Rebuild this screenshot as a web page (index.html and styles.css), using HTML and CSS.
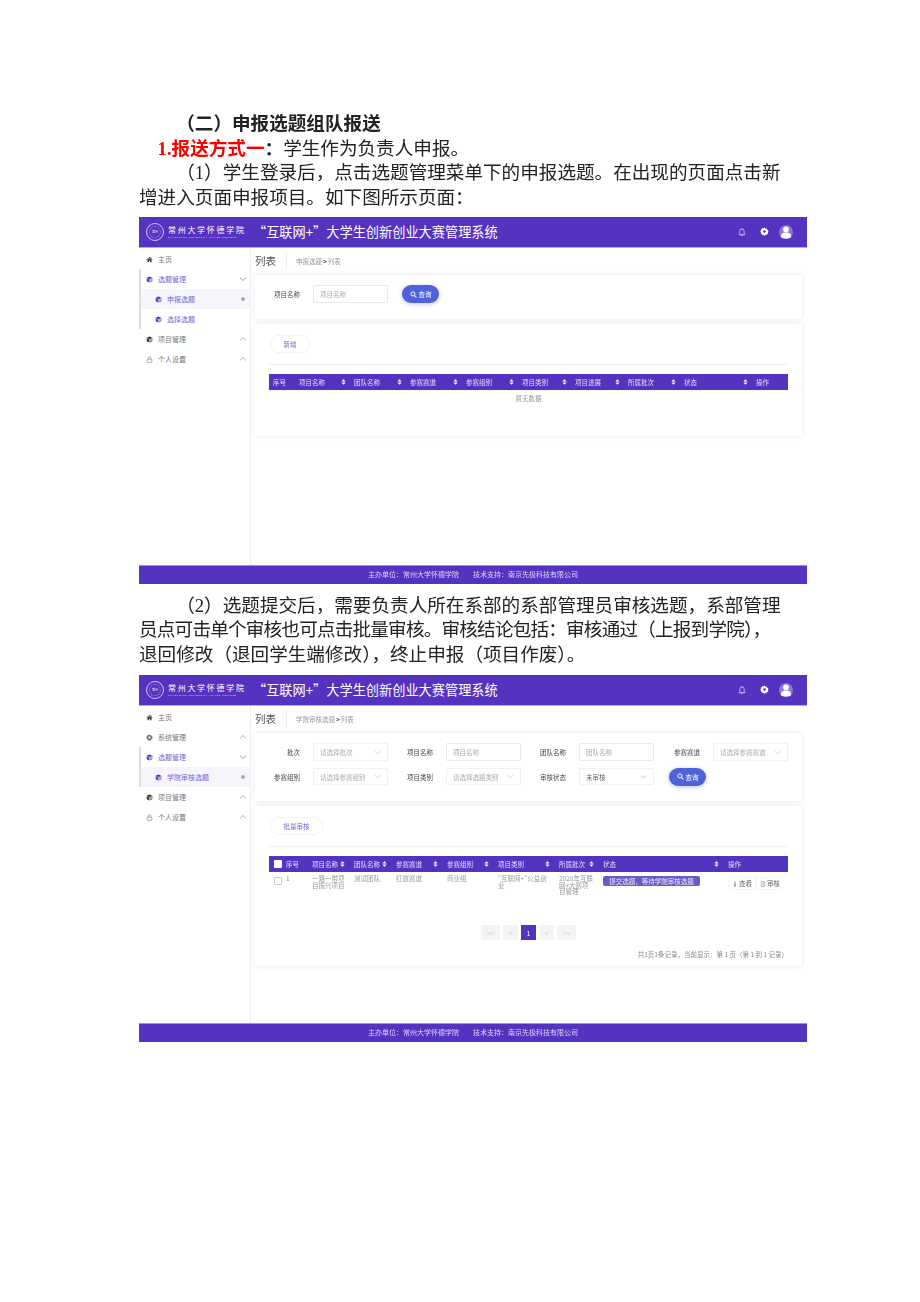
FILE: index.html
```html
<!DOCTYPE html>
<html lang="zh-CN">
<head>
  <meta charset="UTF-8">
  <title>申报选题组队报送</title>
  <link rel="stylesheet" href="styles.css">
</head>
<body>

  <!-- Shared icons -->
  <svg class="icon-defs" xmlns="http://www.w3.org/2000/svg">
    <symbol id="i-home" viewBox="0 0 12 12"><path d="M6 1.5 .8 6.2l.7.7L6 3l4.500 3.900.7-.7-2-1.800V2H8v1.500zM2.500 7v3.500h2.500V8h2v2.500h2.500V7L6 4z" fill="currentColor"/></symbol>
    <symbol id="i-cube" viewBox="0 0 12 12"><path d="M6 .8 1.200 3.200v5.600L6 11.200l4.800-2.400V3.200z" fill="currentColor"/><path d="M6 6 1.500 3.500M6 6v5M6 6l4.500-2.500" stroke="#fff" stroke-width=".8" fill="none"/><path d="M6 6.300v4.400l4.300-2.100V4z" fill="#fff" opacity=".55"/></symbol>
    <symbol id="i-lock" viewBox="0 0 12 12"><rect x="2" y="5.500" width="8" height="5.500" rx="1" fill="none" stroke="currentColor"/><path d="M3.800 5.500V3.400a2.200 2.200 0 0 1 4.400 0v2.100" fill="none" stroke="currentColor"/></symbol>
    <symbol id="i-gear" viewBox="0 0 12 12"><path d="M6 .8l1.100 1.400 1.700-.5.400 1.800 1.800.4-.5 1.700L11.900 6l-1.400 1.100.5 1.700-1.800.4-.4 1.800-1.700-.5L6 11.900l-1.100-1.400-1.700.5-.4-1.800-1.800-.4.5-1.700L.1 6l1.400-1.100-.5-1.700 1.800-.4.400-1.800 1.700.5zM6 4.200a1.800 1.800 0 1 0 0 3.600 1.800 1.800 0 0 0 0-3.600z" fill="currentColor" fill-rule="evenodd"/></symbol>
    <symbol id="i-up" viewBox="0 0 12 12"><path d="M1.500 8 6 3.800 10.500 8" fill="none" stroke="currentColor" stroke-width="1.100"/></symbol>
    <symbol id="i-down" viewBox="0 0 12 12"><path d="M1.500 4 6 8.200 10.500 4" fill="none" stroke="currentColor" stroke-width="1.100"/></symbol>
    <symbol id="i-bell" viewBox="0 0 12 12"><path d="M2.500 9.200h7L8.600 8V5a2.600 2.600 0 0 0-5.200 0v3zM5 10.300h2M6 1.600v.8" fill="none" stroke="currentColor" stroke-width=".9"/></symbol>
    <symbol id="i-user" viewBox="0 0 14 14"><circle cx="7" cy="7" r="7" fill="#8d77d8"/><circle cx="7" cy="4.300" r="2.900" fill="#fff"/><path d="M1.800 12.300c0-3.600 2-4.800 5.200-4.800s5.200 1.200 5.200 4.800c-1 .8-3 1.200-5.200 1.200s-4.200-.4-5.200-1.200z" fill="#fff"/></symbol>
    <symbol id="i-search" viewBox="0 0 12 12"><circle cx="5" cy="5" r="3.500" fill="none" stroke="#fff" stroke-width="1.600"/><path d="m7.800 7.800 3.200 3.200" stroke="#fff" stroke-width="1.800"/></symbol>
    <symbol id="i-sort" viewBox="0 0 8 10"><path d="M4 .5 7.500 4h-7zM4 9.500.5 6h7z" fill="#fff"/></symbol>
    <symbol id="i-info" viewBox="0 0 6 12"><path d="M2 1h2v2H2zM1 4.500h3V10h1v1H1v-1h1V5.500H1z" fill="currentColor"/></symbol>
    <symbol id="i-file" viewBox="0 0 12 12"><path d="M2.500 1h4.700l2.300 2.300V11h-7zM7 1v2.500h2.500M4 6h4M4 8h4" fill="none" stroke="currentColor" stroke-width=".8"/></symbol>
  </svg>

  <main class="doc">
    <p class="para indent-2 strong">（二）申报选题组队报送</p>
    <p class="para indent-1"><span class="red"><span class="latin">1.</span>报送方式一</span><b>：</b>学生作为负责人申报。</p>
    <p class="para indent-2">（<span class="latin-plain">1</span>）学生登录后，点击选题管理菜单下的申报选题。在出现的页面点击新<br><span class="no-indent">增进入页面申报项目。如下图所示页面：</span></p>

    <!-- Screenshot 1: student -->
    <section class="app">
      <header class="app-head">
        <div class="logo">
          <div class="logo-seal"><span>常州</span></div>
          <div class="logo-text">
            <div class="logo-cn">常州大学怀德学院</div>
            <div class="logo-en">CHANGZHOU UNIVERSITY HUAIDE COLLEGE</div>
          </div>
        </div>
        <h1 class="app-title">“互联网+”大学生创新创业大赛管理系统</h1>
        <div class="head-icons">
          <svg class="ic-bell"><use href="#i-bell"/></svg>
          <svg class="ic-gear"><use href="#i-gear"/></svg>
          <svg class="ic-user"><use href="#i-user"/></svg>
        </div>
      </header>
      <div class="app-body">
        <nav class="side">
          <div class="nav-item"><svg class="nav-ic dark"><use href="#i-home"/></svg>主页</div>
          <div class="nav-group">
            <div class="nav-item open"><svg class="nav-ic"><use href="#i-cube"/></svg>选题管理<svg class="chev"><use href="#i-down"/></svg></div>
            <div class="nav-item sub active"><svg class="nav-ic"><use href="#i-cube"/></svg>申报选题<i class="dot"></i></div>
            <div class="nav-item sub"><svg class="nav-ic"><use href="#i-cube"/></svg>选择选题</div>
          </div>
          <div class="nav-item"><svg class="nav-ic dark"><use href="#i-cube"/></svg>项目管理<svg class="chev"><use href="#i-up"/></svg></div>
          <div class="nav-item"><svg class="nav-ic"><use href="#i-lock"/></svg>个人设置<svg class="chev"><use href="#i-up"/></svg></div>
        </nav>
        <div class="content">
          <div class="crumbs">
            <span class="crumb-title">列表</span>
            <span class="crumb-path">申报选题<b>&gt;</b>列表</span>
          </div>
          <div class="card filter filter-short">
            <label>项目名称</label>
            <div class="field">项目名称</div>
            <button class="btn-search"><svg><use href="#i-search"/></svg>查询</button>
          </div>
          <div class="card list list-short">
            <button class="btn-ghost btn-add">新增</button>
            <hr class="rule">
            <div class="thead cols-plain">
              <div>序号</div>
              <div>项目名称<svg><use href="#i-sort"/></svg></div>
              <div>团队名称<svg><use href="#i-sort"/></svg></div>
              <div>参赛赛道<svg><use href="#i-sort"/></svg></div>
              <div>参赛组别<svg><use href="#i-sort"/></svg></div>
              <div>项目类别<svg><use href="#i-sort"/></svg></div>
              <div>项目进展<svg><use href="#i-sort"/></svg></div>
              <div>所属批次<svg><use href="#i-sort"/></svg></div>
              <div>状态<svg><use href="#i-sort"/></svg></div>
              <div>操作</div>
            </div>
            <div class="empty">暂无数据</div>
          </div>
        </div>
      </div>
      <footer class="app-foot"><span>主办单位：常州大学怀德学院</span><span>技术支持：南京先极科技有限公司</span></footer>
    </section>

    <p class="para indent-2 gap-top">（<span class="latin-plain">2</span>）选题提交后，需要负责人所在系部的系部管理员审核选题，系部管理<br><span class="no-indent tight">员点可击单个审核也可点击批量审核。审核结论包括：审核通过（上报到学院），</span><br><span class="no-indent">退回修改（退回学生端修改），终止申报（项目作废）。</span></p>

    <!-- Screenshot 2: college reviewer -->
    <section class="app">
      <header class="app-head">
        <div class="logo">
          <div class="logo-seal"><span>常州</span></div>
          <div class="logo-text">
            <div class="logo-cn">常州大学怀德学院</div>
            <div class="logo-en">CHANGZHOU UNIVERSITY HUAIDE COLLEGE</div>
          </div>
        </div>
        <h1 class="app-title">“互联网+”大学生创新创业大赛管理系统</h1>
        <div class="head-icons">
          <svg class="ic-bell"><use href="#i-bell"/></svg>
          <svg class="ic-gear"><use href="#i-gear"/></svg>
          <svg class="ic-user"><use href="#i-user"/></svg>
        </div>
      </header>
      <div class="app-body">
        <nav class="side">
          <div class="nav-item"><svg class="nav-ic dark"><use href="#i-home"/></svg>主页</div>
          <div class="nav-item"><svg class="nav-ic"><use href="#i-gear"/></svg>系统管理<svg class="chev"><use href="#i-up"/></svg></div>
          <div class="nav-group">
            <div class="nav-item open"><svg class="nav-ic"><use href="#i-cube"/></svg>选题管理<svg class="chev"><use href="#i-down"/></svg></div>
            <div class="nav-item sub active"><svg class="nav-ic"><use href="#i-cube"/></svg>学院审核选题<i class="dot"></i></div>
          </div>
          <div class="nav-item"><svg class="nav-ic dark"><use href="#i-cube"/></svg>项目管理<svg class="chev"><use href="#i-up"/></svg></div>
          <div class="nav-item"><svg class="nav-ic"><use href="#i-lock"/></svg>个人设置<svg class="chev"><use href="#i-up"/></svg></div>
        </nav>
        <div class="content">
          <div class="crumbs">
            <span class="crumb-title">列表</span>
            <span class="crumb-path">学院审核选题<b>&gt;</b>列表</span>
          </div>
          <div class="card filter filter-full">
            <label>批次</label>
            <div class="field select">请选择批次<svg><use href="#i-down"/></svg></div>
            <label>项目名称</label>
            <div class="field">项目名称</div>
            <label>团队名称</label>
            <div class="field">团队名称</div>
            <label>参赛赛道</label>
            <div class="field select">请选择参赛赛道<svg><use href="#i-down"/></svg></div>
            <label>参赛组别</label>
            <div class="field select">请选择参赛组别<svg><use href="#i-down"/></svg></div>
            <label>项目类别</label>
            <div class="field select">请选择选题类别<svg><use href="#i-down"/></svg></div>
            <label>审核状态</label>
            <div class="field select filled">未审核<svg><use href="#i-down"/></svg></div>
            <button class="btn-search btn-wide-cell"><svg><use href="#i-search"/></svg>查询</button>
          </div>
          <div class="card list list-full">
            <button class="btn-ghost btn-batch">批量审核</button>
            <hr class="rule">
            <div class="thead cols-check">
              <div class="check-cell"><i class="check solid"></i>序号</div>
              <div>项目名称<svg><use href="#i-sort"/></svg></div>
              <div>团队名称<svg><use href="#i-sort"/></svg></div>
              <div>参赛赛道<svg><use href="#i-sort"/></svg></div>
              <div>参赛组别<svg><use href="#i-sort"/></svg></div>
              <div>项目类别<svg><use href="#i-sort"/></svg></div>
              <div>所属批次<svg><use href="#i-sort"/></svg></div>
              <div>状态<svg><use href="#i-sort"/></svg></div>
              <div>操作</div>
            </div>
            <div class="trow cols-check">
              <div class="check-cell"><i class="check"></i>1</div>
              <div>一路一带项目振兴项目</div>
              <div>测试团队</div>
              <div>红旅赛道</div>
              <div>商业组</div>
              <div>"互联网+"公益创业</div>
              <div>2020年互联网+大赛项目管理</div>
              <div><span class="badge">提交选题，等待学院审核选题</span></div>
              <div class="actions">
                <span><svg><use href="#i-info"/></svg>查看</span>
                <span><svg><use href="#i-file"/></svg>审核</span>
              </div>
            </div>
            <div class="pager">
              <span class="page wide">&lt;&lt;</span>
              <span class="page">&lt;</span>
              <span class="page current">1</span>
              <span class="page">&gt;</span>
              <span class="page wide">&gt;&gt;</span>
            </div>
            <div class="summary">共1页1条记录，当前显示：第 1 页（第 1 到 1 记录）</div>
          </div>
        </div>
      </div>
      <footer class="app-foot"><span>主办单位：常州大学怀德学院</span><span>技术支持：南京先极科技有限公司</span></footer>
    </section>
  </main>

</body>
</html>
```

FILE: styles.css
```css
* {
  box-sizing: border-box;
  margin: 0;
  padding: 0;
}

body {
  background: #fff;
  color: #222;
  font-family: "Liberation Serif", "Noto Sans CJK SC", serif;
  min-height: 1302px;
}

.icon-defs {
  display: none;
}

/* Document text */
.doc {
  width: 668px;
  margin-left: 139px;
  padding-top: 112px;
}

.para {
  font-size: 18.6px;
  line-height: 24.5px;
  white-space: nowrap;
  filter: blur(0.3px);
}

.para + .app {
  margin-top: 7px;
}

.gap-top {
  margin-top: 9.5px;
}

.gap-top + .app {
  margin-top: 8px;
}

.indent-1 {
  padding-left: 1em;
}

.indent-2 {
  padding-left: 2em;
}

.no-indent {
  margin-left: -2em;
}

.tight {
  letter-spacing: -0.8px;
}

.strong {
  font-weight: 700;
}

.red {
  color: #f00;
  font-weight: 700;
}

.latin,
.latin-plain {
  font-family: "Liberation Serif", serif;
}

/* Embedded screenshots */
.app {
  display: flex;
  flex-direction: column;
  height: 367px;
  background: #fff;
  font-family: "Noto Sans CJK SC", "Noto Sans", sans-serif;
  font-size: 6.5px;
  color: #777;
  filter: blur(0.35px);
}

.app svg {
  flex: none;
}

.app-head {
  display: flex;
  align-items: center;
  flex: none;
  height: 31px;
  padding: 0 14px 1px 7px;
  background: #5532c0;
  border-bottom: 1px solid #b8a8ea;
  color: #fff;
}

.logo {
  display: flex;
  align-items: center;
  gap: 4px;
  width: 107px;
}

.logo-seal {
  display: flex;
  align-items: center;
  justify-content: center;
  flex: none;
  width: 18px;
  height: 18px;
  border: 1px solid #cfc4f0;
  border-radius: 50%;
  outline: 1px dotted #a896e4;
  outline-offset: -4px;
  font-size: 3px;
}

.logo-cn {
  font-family: "Liberation Serif", "Noto Sans CJK SC", serif;
  font-size: 8px;
  line-height: 11px;
  letter-spacing: 1.7px;
  white-space: nowrap;
}

.logo-en {
  font-family: "Liberation Sans", sans-serif;
  font-size: 2.2px;
  line-height: 3px;
  letter-spacing: 0.6px;
  white-space: nowrap;
  opacity: 0.85;
}

.app-title {
  font-size: 13.2px;
  font-weight: 400;
  white-space: nowrap;
}

.head-icons {
  display: flex;
  align-items: center;
  margin-left: auto;
}

.ic-bell {
  width: 10px;
  height: 10px;
  color: #e6e0f8;
}

.ic-gear {
  width: 9px;
  height: 9px;
  margin-left: 13px;
}

.ic-user {
  width: 14px;
  height: 14px;
  margin-left: 10px;
}

.app-body {
  display: flex;
  flex: 1;
  min-height: 0;
}

/* Sidebar */
.side {
  flex: none;
  width: 112px;
  padding-top: 1px;
  border-right: 1px solid #eee;
  font-size: 7px;
  color: #777;
}

.nav-group {
  border-left: 2px solid #ddd;
}

.nav-item {
  display: flex;
  align-items: center;
  height: 20px;
  padding: 0 3px 0 7px;
  white-space: nowrap;
}

.nav-group .nav-item {
  padding-left: 5px;
}

.nav-group .nav-item.sub {
  padding-left: 14px;
}

.nav-item.open,
.nav-item.sub {
  color: #7a68cf;
}

.nav-item.active {
  background: #f5f5fb;
}

.nav-ic {
  width: 7px;
  height: 7px;
  margin-right: 5px;
  color: #5532c0;
}

.nav-ic.dark {
  color: #333;
}

.nav-item:has(use[href="#i-lock"]) .nav-ic,
.nav-item:has(use[href="#i-gear"]) .nav-ic {
  color: #777;
}

.chev {
  width: 8px;
  height: 8px;
  margin-left: auto;
  color: #999;
}

.open .chev {
  color: #7a68cf;
}

.dot {
  width: 4px;
  height: 4px;
  margin: 0 2px 0 auto;
  border-radius: 50%;
  background: #aaa;
}

/* Main area */
.content {
  flex: 1;
  min-width: 0;
  padding: 4px 5px 0 4px;
}

.crumbs {
  display: flex;
  align-items: center;
  height: 18px;
}

.crumb-title {
  width: 32px;
  height: 18px;
  border-right: 1px solid #eee;
  font-size: 10.5px;
  line-height: 17px;
  color: #555;
}

.crumb-path {
  margin-left: 9px;
  color: #999;
}

.crumb-path b {
  margin: 0 1px;
  color: #555;
}

.card {
  background: #fff;
  border-radius: 2px;
  box-shadow: 0 0 5px rgba(40, 30, 90, 0.12);
}

.filter {
  display: grid;
  column-gap: 13px;
  row-gap: 7px;
  align-items: center;
  margin-top: 5px;
  padding-top: 10px;
}

.filter-short {
  grid-template-columns: 45px 75px 37px;
  grid-template-rows: 18px;
  height: 44px;
}

.filter-full {
  grid-template-columns: 45px 75px 32px 75px 32px 75px 33px 75px;
  grid-template-rows: 18px 17px;
  height: 68px;
}

.filter label {
  color: #444;
  text-align: right;
  white-space: nowrap;
}

.field {
  display: flex;
  align-items: center;
  justify-content: space-between;
  height: 100%;
  padding: 0 6px;
  border: 1px solid #e6eaf4;
  border-radius: 1px;
  color: #aaa;
  white-space: nowrap;
}

.field.select {
  border-color: #f0f0f5;
}

.field.filled {
  color: #666;
}

.field svg {
  width: 7px;
  height: 7px;
  color: #aaa;
}

.btn-search {
  display: flex;
  align-items: center;
  justify-content: center;
  gap: 2px;
  width: 37px;
  height: 18px;
  margin-left: 1px;
  border: none;
  border-radius: 9px;
  background: #4f62d8;
  box-shadow: 0 1px 4px rgba(79, 98, 216, 0.4);
  color: #fff;
  font: inherit;
}

.btn-search svg {
  width: 7px;
  height: 7px;
}

.btn-wide-cell {
  grid-column: 7 / 9;
  margin-left: 2px;
}

.list {
  display: flow-root;
  margin-top: 5px;
  padding: 11px 14px 0;
}

.list-short {
  height: 112px;
}

.list-full {
  height: 160px;
}

.btn-ghost {
  display: block;
  height: 18px;
  margin-left: 1px;
  border: 1px solid #f2f2f6;
  border-radius: 9px;
  background: #fff;
  color: #7a68cf;
  font: inherit;
}

.btn-add {
  width: 40px;
}

.btn-batch {
  width: 53px;
}

.rule {
  height: 1px;
  margin-top: 11px;
  border: none;
  background: #eee;
}

/* Tables */
.thead {
  display: grid;
  align-items: center;
  height: 16px;
  margin-top: 9px;
  padding-left: 4px;
  background: #5532c0;
  color: #e4def8;
}

.thead > div {
  display: flex;
  align-items: center;
  justify-content: space-between;
  padding-right: 8px;
  white-space: nowrap;
}

.thead svg {
  width: 5px;
  height: 6px;
}

.cols-plain {
  grid-template-columns: 26px 55px 56px 56px 56px 53px 53px 56px 72px 1fr;
}

.cols-check {
  grid-template-columns: 39px 42px 42px 51px 51px 61px 44px 125px 1fr;
}

.thead.cols-check > div {
  padding-right: 9px;
}

.thead.cols-check > .check-cell {
  justify-content: flex-start;
  gap: 4px;
  padding-right: 0;
  padding-left: 1px;
}

.empty {
  padding-top: 3px;
  text-align: center;
  color: #999;
}

.trow {
  display: grid;
  height: 45px;
  padding: 3px 0 0 4px;
  line-height: 6.5px;
  color: #999;
}

.trow > div {
  padding-right: 8px;
}

.trow > .check-cell {
  display: flex;
  gap: 4px;
  padding-left: 1px;
}

.check {
  flex: none;
  width: 8px;
  height: 8px;
  border-radius: 1px;
  background: #fff;
}

.trow .check {
  border: 1px solid #ccc;
  margin-top: 2px;
}

.badge {
  display: inline-block;
  width: 97px;
  margin-top: 1px;
  border-radius: 2px;
  background: #6c59c8;
  color: #ece8fa;
  line-height: 10px;
  text-align: center;
  white-space: nowrap;
}

.actions {
  display: flex;
  align-self: start;
  height: 13px;
  margin-top: 2px;
  padding-right: 0 !important;
  color: #666;
}

.actions span {
  display: flex;
  align-items: center;
  gap: 1px;
  padding: 0 3px;
  border: 1px solid #f6f6f9;
  white-space: nowrap;
}

.actions svg {
  width: 6px;
  height: 6px;
}

.pager {
  display: flex;
  justify-content: center;
  gap: 3px;
  margin-top: 8px;
}

.page {
  display: flex;
  align-items: center;
  justify-content: center;
  width: 15px;
  height: 15px;
  background: #f4f4f4;
  color: #ccc;
}

.page.wide {
  width: 19px;
}

.page.current {
  background: #5532c0;
  color: #fff;
}

.summary {
  margin-top: 9px;
  text-align: right;
  color: #888;
}

.app-foot {
  display: flex;
  justify-content: center;
  gap: 14px;
  flex: none;
  height: 19px;
  border-top: 1px solid #a08ce0;
  background: #5532c0;
  font-size: 7px;
  line-height: 17px;
  color: #ddd6f6;
}
```
